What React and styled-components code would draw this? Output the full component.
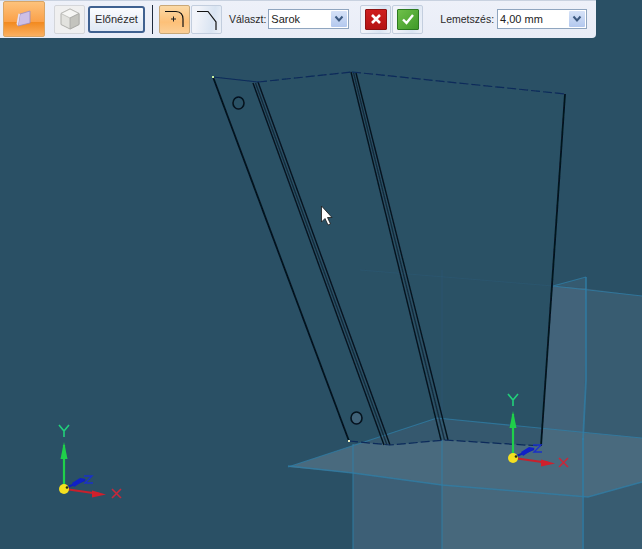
import React from "react";
import styled, { createGlobalStyle } from "styled-components";

const Global = createGlobalStyle`
  html, body { margin: 0; padding: 0; background: #2b5066; }
  #root { width: 642px; height: 549px; overflow: hidden; }
`;

const Stage = styled.div`
  position: relative;
  width: 642px;
  height: 549px;
  background: #2a5065;
  overflow: hidden;
  font-family: "Liberation Sans", Arial, sans-serif;
  font-size: 11px;
  color: #1a1a1a;
`;

const Scene = styled.svg`
  position: absolute;
  inset: 0;
  display: block;
`;

const Toolbar = styled.div`
  position: absolute;
  top: 0;
  left: 0;
  width: 596px;
  height: 38px;
  box-sizing: border-box;
  display: flex;
  align-items: center;
  padding: 0 0 0 3px;
  background: linear-gradient(#eef1f9, #e9edf7);
  border-radius: 0 0 4px 0;
  box-shadow: 0 1px 0 #c9d2e0 inset;
`;

const BigButton = styled.div`
  width: 42px;
  height: 36px;
  margin-right: 9px;
  box-sizing: border-box;
  border: 1px solid #d9a565;
  border-radius: 2px;
  display: flex;
  align-items: center;
  justify-content: center;
  background: linear-gradient(#fdc27c 0%, #fba149 58%, #f28a20 60%, #fbb060 100%);
`;

const ToolButton = styled.div`
  width: ${(p) => p.$w || 31}px;
  height: ${(p) => p.$h || 29}px;
  box-sizing: border-box;
  display: flex;
  align-items: center;
  justify-content: center;
  border: 1px solid ${(p) => (p.$active ? "#c9a878" : p.$plain ? "#d4d6da" : "#c3cede")};
  border-radius: 2px;
  background: ${(p) =>
    p.$active
      ? "linear-gradient(#fbd9a6, #fdc078 60%, #fbcf96)"
      : p.$soft
      ? "linear-gradient(100deg, #f1f3f9 20%, #d9e4f2 70%, #edf1f8)"
      : "#f0f0f0"};
`;

const PreviewButton = styled.div`
  width: 57px;
  height: 27px;
  margin-left: 2px;
  box-sizing: border-box;
  display: flex;
  align-items: center;
  justify-content: center;
  border: 2px solid #3f6190;
  border-radius: 3px;
  background: linear-gradient(#fbfcfe, #dfe8f4);
  font-size: 11px;
  color: #2a2a2a;
`;

const Divider = styled.div`
  width: 1px;
  height: 29px;
  margin: 0 6px 0 7px;
  background: #1e2a3c;
`;

const Group = styled.div`
  display: flex;
  align-items: center;
  gap: 1px;
`;

const Label = styled.span`
  white-space: nowrap;
  font-size: 10.5px;
  margin: 0 ${(p) => p.$mr || 2}px 0 ${(p) => p.$ml || 0}px;
  color: #2a2a2a;
`;

const Select = styled.div`
  width: ${(p) => p.$w}px;
  height: 20px;
  box-sizing: border-box;
  display: flex;
  align-items: center;
  justify-content: space-between;
  padding: 0 1px 0 2px;
  margin-right: ${(p) => p.$mr || 0}px;
  background: #fff;
  border: 1px solid #8fa5bf;
  font-size: 11px;
  color: #222;
`;

const SelectArrow = styled.div`
  width: 16px;
  height: 16px;
  display: flex;
  align-items: center;
  justify-content: center;
  background: linear-gradient(#d6e2f7, #b3c8ee);
  border-radius: 1px;
`;

const ActionBadge = styled.div`
  width: 20px;
  height: 19px;
  display: flex;
  align-items: center;
  justify-content: center;
  border-radius: 1px;
  border: 1px solid ${(p) => (p.$ok ? "#2c7a1f" : "#8e1212")};
  background: ${(p) =>
    p.$ok ? "linear-gradient(135deg, #6fc04a, #3f9a28)" : "linear-gradient(#cf1f1f, #b41414)"};
`;

const Arrow = () => (
  <svg width="10" height="8" viewBox="0 0 10 8">
    <path d="M1.5 1.5 L5 5.5 L8.5 1.5" fill="none" stroke="#3d5a80" strokeWidth="2" />
  </svg>
);

const Axis = ({ x, y, xLabel }) => (
  <g transform={`translate(${x} ${y})`}>
    <line x1="0" y1="0" x2="0" y2="-44" stroke="#1fd04a" strokeWidth="2.2" />
    <path d="M0 -47 L-3.5 -30 L3.5 -30 Z" fill="#1fd04a" />
    <path d="M-5 -64 L0 -58 L5 -64 M0 -58 L0 -52" fill="none" stroke="#22d07a" strokeWidth="1.6" />
    <line x1="1" y1="0" x2="36" y2="5" stroke="#c8202c" strokeWidth="2" />
    <path d="M42 5.5 L28 1.5 L28 8.5 Z" fill="#d0202c" />
    <path d={`M${xLabel} 0 l9 9 M${xLabel + 9} 0 l-9 9`} stroke="#c8283a" strokeWidth="1.6" fill="none" />
    <line x1="1" y1="-1" x2="21" y2="-9" stroke="#1020b8" strokeWidth="2" />
    <path d="M10 -2 L22 -10 L16 -11 L8 -6 Z" fill="#1020c8" />
    <path d="M20 -13 L28 -13 L21 -6 L29 -6" fill="none" stroke="#1a30c8" strokeWidth="1.4" />
    <circle cx="0" cy="0" r="5" fill="#f4e020" />
    <circle cx="3" cy="-1.5" r="1.3" fill="#2a2a10" />
  </g>
);

const Highlight = "#2f7fa8";
const Ink = "#06121f";

function SceneDrawing() {
  return (
    <Scene width="642" height="549" viewBox="0 0 642 549">
      <defs>
        <filter id="soft"><feGaussianBlur stdDeviation="0.4" /></filter>
      </defs>
      <g filter="url(#soft)">
        <polygon points="353,444 353,549 442,549 442,440" fill="#3c5f76" />
        <polygon points="442,440 442,549 582,549 582,440" fill="#46687c" />
        <polygon points="582,288 642,296 642,549 582,549" fill="#385b71" />
        <polygon points="553,286 586,277 586,440 541,440" fill="#41636f" fillOpacity="0" />
        <polygon points="553,286 586,288 584,440 541,440" fill="#42647a" />
        <polygon points="553,286 586,277 586,288" fill="#345a70" />
        <polygon points="288,467 437,418 642,438 642,482 588,497 442,485 353,473" fill="#486a7e" />
        <polygon points="213,77 258,82 352,72 565,94 541,446 445,440 390,445 349,441" fill="#2a5065" fillOpacity="0.66" />

        <g stroke={Highlight} strokeOpacity="0.75" fill="none">
          <path d="M288 467 L437 418 L642 438" strokeWidth="1.2" />
          <path d="M288 466 L353 473 L442 485 L588 497 L642 482" strokeWidth="1.4" />
          <path d="M353 444 V549 M442 440 V549" strokeWidth="1.2" />
          <path d="M583 438 V549" strokeWidth="1.8" />
          <path d="M586 277 V380 L583 440" strokeWidth="1.8" />
          <path d="M553 286 L586 277 M553 286 L642 296" strokeWidth="1.2" />
        </g>
        <g stroke={Highlight} strokeOpacity="0.12" fill="none">
          <path d="M360 270 L553 286 M442 270 V440" strokeWidth="1" />
        </g>

        <g stroke={Ink} strokeWidth="1.4" fill="none">
          <path d="M213 77 L349 441" strokeWidth="1.8" />
          <path d="M253 83 L384 445" />
          <path d="M258 82 L390 445" />
          <path d="M255.5 83 L387 445" strokeOpacity="0.6" />
          <path d="M351 72 L441 440" />
          <path d="M356 73 L448 440" />
          <path d="M353.5 72.5 L444.5 440" strokeOpacity="0.6" />
          <path d="M565 94 L541 446" strokeWidth="1.8" />
        </g>
        <g stroke="#0c2a5a" strokeWidth="1.2" fill="none">
          <path d="M213 77 L258 82" />
          <path d="M258 82 L352 72" strokeDasharray="9 3" />
          <path d="M352 72 L565 94" strokeDasharray="9 3" />
          <path d="M349 441 L390 445 L445 440 L541 446" strokeDasharray="9 3" />
        </g>
        <ellipse cx="238.5" cy="103" rx="5.5" ry="6" fill="none" stroke={Ink} strokeWidth="1.6" />
        <ellipse cx="356.5" cy="418" rx="5.5" ry="6" fill="#3f6278" stroke={Ink} strokeWidth="1.6" />
      </g>
      <rect x="212" y="76" width="2" height="2" fill="#c8f0a0" />
      <rect x="348" y="440" width="2" height="2" fill="#f0f0c0" />

      <Axis x={64} y={489} xLabel={48} />
      <Axis x={513} y={458} xLabel={46} />

      <path
        d="M321.5 206 V222 L325 218.5 L328 225 L330.5 224 L327.5 217.5 L332 217.5 Z"
        fill="#fff"
        stroke="#1a1a1a"
        strokeWidth="0.8"
      />
    </Scene>
  );
}

export default function App() {
  return (
    <Stage>
      <Global />
      <SceneDrawing />
      <Toolbar>
        <BigButton>
          <svg width="18" height="20" viewBox="0 0 18 20">
            <path d="M5 5 L15 2 V14 L3 17 Z" fill="#cdbfe6" stroke="#9a8cc0" strokeWidth="0.8" />
            <path d="M5 5 L3 17 L1.5 15 L3.5 4.5 Z" fill="#e6dff2" />
          </svg>
        </BigButton>
        <Group>
          <ToolButton $plain>
            <svg width="22" height="24" viewBox="0 0 22 24">
              <path d="M11 2 L20 6.5 V17.5 L11 22 L2 17.5 V6.5 Z" fill="#e2e2de" stroke="#b0b0ac" strokeWidth="1" />
              <path d="M2 6.5 L11 11 L20 6.5 L11 2 Z" fill="#f6f6f4" stroke="#b8b8b4" strokeWidth="0.8" />
              <path d="M11 11 V22 L20 17.5 V6.5 Z" fill="#c4c4be" stroke="#a8a8a4" strokeWidth="0.8" />
            </svg>
          </ToolButton>
          <PreviewButton>Előnézet</PreviewButton>
        </Group>
        <Divider />
        <Group>
          <ToolButton $active>
            <svg width="24" height="24" viewBox="0 0 24 24">
              <path d="M2 4.5 H13 Q20 5 20 12 V20" fill="none" stroke="#111" strokeWidth="1.2" />
              <path d="M8 12 H13 M10.5 9.5 V14.5" stroke="#222" strokeWidth="1" />
            </svg>
          </ToolButton>
          <ToolButton $soft>
            <svg width="24" height="24" viewBox="0 0 24 24">
              <path d="M2 4.5 H13 L21 15 V23" fill="none" stroke="#111" strokeWidth="1.2" />
            </svg>
          </ToolButton>
        </Group>
        <Label $ml={7} $mr={2}>Választ:</Label>
        <Select $w={81} $mr={11}>
          Sarok
          <SelectArrow><Arrow /></SelectArrow>
        </Select>
        <Group>
          <ToolButton $soft>
            <ActionBadge>
              <svg width="12" height="12" viewBox="0 0 12 12">
                <path d="M2 2 L10 10 M10 2 L2 10" stroke="#fff" strokeWidth="2.6" />
              </svg>
            </ActionBadge>
          </ToolButton>
          <ToolButton $soft>
            <ActionBadge $ok>
              <svg width="14" height="12" viewBox="0 0 14 12">
                <path d="M2 6.5 L5.5 10 L12 2" fill="none" stroke="#fff" strokeWidth="2.4" />
              </svg>
            </ActionBadge>
          </ToolButton>
        </Group>
        <Label $ml={17} $mr={3}>Lemetszés:</Label>
        <Select $w={90}>
          4,00 mm
          <SelectArrow><Arrow /></SelectArrow>
        </Select>
      </Toolbar>
    </Stage>
  );
}
